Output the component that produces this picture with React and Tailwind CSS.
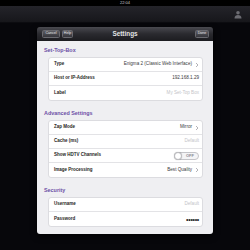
import React from "react";

const font = { fontFamily: '"Liberation Sans", Arial, sans-serif' };

const Chevron = () => (
	<svg width="4" height="6" viewBox="0 0 4 6" className="ml-[3px] shrink-0">
		<path d="M1 1 L3 3 L1 5" stroke="#a0a0a6" strokeWidth="0.8" fill="none" />
	</svg>
);

const Row = ({ label, value, muted, chevron, last, children }) => (
	<div
		className={`h-[14px] flex items-center justify-between pl-[5px] pr-[3px] ${
			last ? "" : "border-b border-[#e3e3e6]"
		}`}>
		<span className="text-[4.5px] font-bold text-[#1e1e22] leading-none">{label}</span>
		{children ? (
			children
		) : (
			<span className="flex items-center">
				<span
					className={`text-[4.6px] leading-none ${
						muted ? "text-[#c4c4c8]" : "text-[#3a3a40]"
					}`}>
					{value}
				</span>
				{chevron && <Chevron />}
			</span>
		)}
	</div>
);

const Heading = ({ children, className = "" }) => (
	<div
		className={`h-[8px] flex items-center pl-[7px] text-[5.4px] font-bold text-[#6d4fa6] leading-none ${className}`}>
		{children}
	</div>
);

const Group = ({ children }) => (
	<div className="ml-[11px] mr-[10px] bg-white rounded-[3px] border border-[#dcdce0] overflow-hidden">
		{children}
	</div>
);

const HeadBtn = ({ children, className = "" }) => (
	<div
		className={`h-[8px] px-[3px] flex items-center justify-center rounded-[1.5px] border border-[#6a6a70] bg-gradient-to-b from-[#5c5c62] to-[#36363c] text-[3.6px] text-[#e8e8ea] leading-none ${className}`}>
		{children}
	</div>
);

export default function App() {
	return (
		<div className="w-[250px] h-[250px] bg-[#07070b] overflow-hidden flex flex-col" style={font}>
			{/* status bar */}
			<div className="h-[6px] bg-black flex items-center justify-center">
				<span className="text-[4px] leading-none text-[#c8c8cc]">22:04</span>
			</div>

			{/* nav bar */}
			<div className="h-[17px] bg-gradient-to-b from-[#24242a] to-[#17171b] flex items-center justify-end pr-[8px] border-b border-[#0c0c10]">
				<svg width="8" height="9" viewBox="0 0 8 9">
					<circle cx="4" cy="2.8" r="1.8" fill="#6c6c72" />
					<path d="M0.5 8.5 C0.5 5.8 2.2 5.1 4 5.1 C5.8 5.1 7.5 5.8 7.5 8.5 Z" fill="#6c6c72" />
				</svg>
			</div>

			{/* modal */}
			<div className="ml-[37px] mt-[4px] w-[176px] rounded-[3px] overflow-hidden shadow-[0_2px_6px_rgba(0,0,0,0.8)]">
				<div className="h-[14px] bg-gradient-to-b from-[#4a4a50] via-[#2a2a2f] to-[#1c1c20] flex items-center px-[5px] relative">
					<HeadBtn className="w-[18px]">Cancel</HeadBtn>
					<HeadBtn className="w-[11px] ml-[2px]">Help</HeadBtn>
					<span className="absolute left-0 right-0 text-center text-[6.4px] font-bold text-[#e4e4e6] leading-none pointer-events-none">
						Settings
					</span>
					<HeadBtn className="w-[14px] ml-auto mr-[-1px]">Done</HeadBtn>
				</div>

				<div className="bg-[#efeff2] pt-[6px] pb-[7px]">
					<Heading className="mb-[2px]">Set-Top-Box</Heading>
					<Group>
						<Row label="Type" value="Enigma 2 (Classic Web Interface)" chevron />
						<Row label="Host or IP-Address" value="192.168.1.29" />
						<Row label="Label" value="My Set-Top Box" muted last />
					</Group>

					<Heading className="mt-[9px] mb-[2px]">Advanced Settings</Heading>
					<Group>
						<Row label="Zap Mode" value="Mirror" chevron />
						<Row label="Cache (ms)" value="Default" muted />
						<Row label="Show HDTV Channels">
							<div className="w-[25px] h-[8px] rounded-full border border-[#c4c4c8] bg-[#f4f4f6] flex items-center">
								<div className="w-[8px] h-[8px] -ml-px rounded-full bg-white border border-[#bcbcc0] shadow-[0_0_1px_rgba(0,0,0,0.3)]" />
								<span className="flex-1 text-center text-[4px] font-bold text-[#8c8c92] leading-none">OFF</span>
							</div>
						</Row>
						<Row label="Image Processing" value="Best Quality" chevron last />
					</Group>

					<Heading className="mt-[9px] mb-[2px]">Security</Heading>
					<Group>
						<Row label="Username" value="Default" muted />
						<Row label="Password" last>
							<span className="text-[7px] leading-none text-[#1e1e22] tracking-[-0.3px]">••••••</span>
						</Row>
					</Group>
				</div>
			</div>
		</div>
	);
}
